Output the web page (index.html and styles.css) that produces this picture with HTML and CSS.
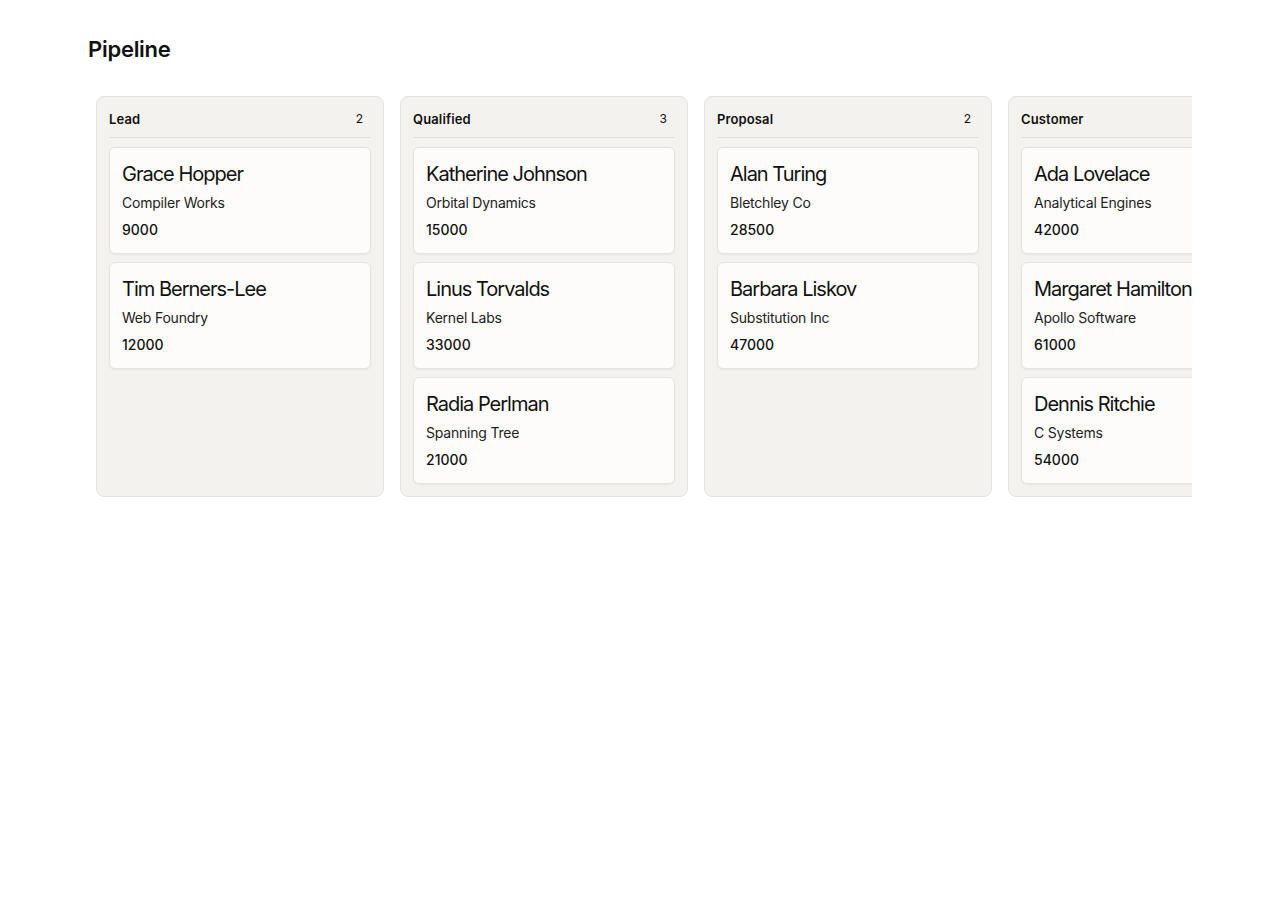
FILE: index.html
```html
<!DOCTYPE html>
<html lang="en">
<head>
    <meta charset="UTF-8">
    <meta name="viewport" content="width=device-width, initial-scale=1.0">
    <title>Pipeline</title>
    <link rel="stylesheet" href="styles.css">
</head>
<body>

    <div class="page">
        <h1 class="page-title">Pipeline</h1>

        <!-- Board -->
        <div class="board">
            <div class="column">
                <div class="column-header">
                    <span class="column-title">Lead</span>
                    <span class="column-count">2</span>
                </div>
                <div class="card">
                    <div class="card-name">Grace Hopper</div>
                    <div class="card-company">Compiler Works</div>
                    <div class="card-value">9000</div>
                </div>
                <div class="card">
                    <div class="card-name">Tim Berners-Lee</div>
                    <div class="card-company">Web Foundry</div>
                    <div class="card-value">12000</div>
                </div>
            </div>

            <div class="column">
                <div class="column-header">
                    <span class="column-title">Qualified</span>
                    <span class="column-count">3</span>
                </div>
                <div class="card">
                    <div class="card-name">Katherine Johnson</div>
                    <div class="card-company">Orbital Dynamics</div>
                    <div class="card-value">15000</div>
                </div>
                <div class="card">
                    <div class="card-name">Linus Torvalds</div>
                    <div class="card-company">Kernel Labs</div>
                    <div class="card-value">33000</div>
                </div>
                <div class="card">
                    <div class="card-name">Radia Perlman</div>
                    <div class="card-company">Spanning Tree</div>
                    <div class="card-value">21000</div>
                </div>
            </div>

            <div class="column">
                <div class="column-header">
                    <span class="column-title">Proposal</span>
                    <span class="column-count">2</span>
                </div>
                <div class="card">
                    <div class="card-name">Alan Turing</div>
                    <div class="card-company">Bletchley Co</div>
                    <div class="card-value">28500</div>
                </div>
                <div class="card">
                    <div class="card-name">Barbara Liskov</div>
                    <div class="card-company">Substitution Inc</div>
                    <div class="card-value">47000</div>
                </div>
            </div>

            <div class="column">
                <div class="column-header">
                    <span class="column-title">Customer</span>
                    <span class="column-count">3</span>
                </div>
                <div class="card">
                    <div class="card-name">Ada Lovelace</div>
                    <div class="card-company">Analytical Engines</div>
                    <div class="card-value">42000</div>
                </div>
                <div class="card">
                    <div class="card-name">Margaret Hamilton</div>
                    <div class="card-company">Apollo Software</div>
                    <div class="card-value">61000</div>
                </div>
                <div class="card">
                    <div class="card-name">Dennis Ritchie</div>
                    <div class="card-company">C Systems</div>
                    <div class="card-value">54000</div>
                </div>
            </div>
        </div>
    </div>

</body>
</html>
```

FILE: styles.css
```css
body {
    font-family: Inter, 'Noto Sans', sans-serif;
    background-color: #ffffff;
    color: #111111;
    margin: 0;
}

.page {
    max-width: 1104px;
    margin: 0 auto;
    padding-top: 33px;
}

.page-title {
    margin: 0 0 23px;
    font-size: 22px;
    line-height: 32px;
    font-weight: 600;
    letter-spacing: -0.012em;
    color: #111;
}

.board {
    display: flex;
    align-items: stretch;
    gap: 16px;
    padding: 8px;
    overflow: hidden;
}

.column {
    flex: 0 0 288px;
    box-sizing: border-box;
    background: #f3f2ee;
    border: 1px solid #e4e2dd;
    border-radius: 8px;
    padding: 12px;
}

.column-header {
    display: flex;
    justify-content: space-between;
    align-items: center;
    padding-bottom: 8px;
    border-bottom: 1px solid #e2e0db;
    margin-bottom: 9px;
}

.column-title {
    font-size: 13px;
    line-height: 20px;
    font-weight: 600;
    letter-spacing: 0.01em;
}

.column-count {
    font-size: 12px;
    line-height: 20px;
    padding: 0 8px;
}

.card {
    background: #fdfcfa;
    border: 1px solid #e6e4df;
    border-radius: 6px;
    padding: 12px 12px 13px;
    margin-bottom: 8px;
    box-shadow: 0 1px 2px rgba(0, 0, 0, 0.05);
}

.card:last-child {
    margin-bottom: 0;
}

.card-name {
    font-size: 20px;
    line-height: 28px;
    letter-spacing: -0.05em;
    margin-bottom: 5px;
}

.card-company {
    font-size: 14px;
    line-height: 20px;
    letter-spacing: -0.015em;
    color: #222;
    margin-bottom: 7px;
}

.card-value {
    font-size: 14px;
    line-height: 20px;
    font-weight: 500;
}
```
